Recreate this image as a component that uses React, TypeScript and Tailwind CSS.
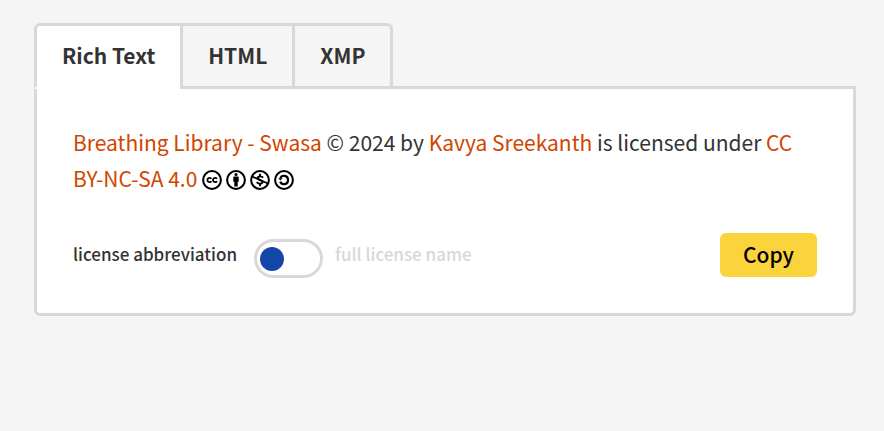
import { useState, type ReactNode } from "react";

const tabs = ["Rich Text", "HTML", "XMP"];

function Badge({ children }: { children: ReactNode }) {
  return (
    <svg viewBox="0 0 64 64" className="size-5" fill="none" stroke="currentColor" aria-hidden="true">
      <circle cx="32" cy="32" r="28.5" strokeWidth="6.5" />
      {children}
    </svg>
  );
}

function LicenseIcons() {
  return (
    <span className="mb-0.5 inline-flex gap-1 align-middle text-black">
      <Badge>
        <path d="M30 28A7 7 0 1 0 30 36M48 28A7 7 0 1 0 48 36" strokeWidth="5.8" />
      </Badge>
      <Badge>
        <g fill="currentColor" stroke="none">
          <circle cx="32" cy="14.5" r="5" />
          <path d="M25.5 21h13a2.2 2.2 0 0 1 2.2 2.2v14.3H37.5V53h-11V37.5h-3.200V23.200a2.200 2.200 0 0 1 2.200-2.200Z" />
        </g>
      </Badge>
      <Badge>
        <path d="M5 20 59 44" strokeWidth="6" />
        <path
          d="M42 24.500C37 19 24.500 19 24.500 26.500C24.500 32.500 40 31.500 40 38C40 46 27 45 21.500 38.500M32 12v8M32 44v8"
          strokeWidth="6"
        />
      </Badge>
      <Badge>
        <path d="M20.500 26C24 15 45 15.500 45 32S24 49 20 37.500" strokeWidth="7" />
        <path d="M13.500 26.500h14L20.500 33.500Z" fill="currentColor" stroke="none" />
      </Badge>
    </span>
  );
}

export default function App() {
  const [active, setActive] = useState("Rich Text");
  const [fullName, setFullName] = useState(false);

  return (
    <main className="min-h-screen bg-[#f5f5f5] pt-[23px] pr-7 pl-[34px] font-['Noto_Sans_CJK_SC','Open_Sans',sans-serif] text-[#333333]">
      <div role="tablist" className="relative flex">
        {tabs.map((tab) => (
          <button
            key={tab}
            type="button"
            role="tab"
            aria-selected={active === tab}
            onClick={() => setActive(tab)}
            className={`h-[66px] border-3 border-[#d8d8d8] px-[25px] pb-0.5 text-[21px] leading-6 font-bold not-first:-ml-[3px] first:rounded-tl-md last:rounded-tr-md ${
              active === tab ? "border-b-white bg-white" : "bg-[#f5f5f5]"
            }`}
          >
            {tab}
          </button>
        ))}
      </div>

      <section
        role="tabpanel"
        className="-mt-[3px] rounded-b-md border-3 border-[#d8d8d8] bg-white px-9 pt-[35px] pb-9"
      >
        <p className="text-[21px] leading-9">
          <a href="#work" className="text-[#d14500]">Breathing Library - Swasa</a> © 2024 by{" "}
          <a href="#creator" className="text-[#d14500]">Kavya Sreekanth</a> is licensed under{" "}
          <a href="#license" className="text-[#d14500]">CC BY-NC-SA 4.0</a>{" "}
          <LicenseIcons />
        </p>

        <div className="mt-[37px] flex h-11 items-start justify-between">
          <label className="flex items-start text-[17px] leading-6 font-medium">
            <span className={`mt-[9px] ${fullName ? "text-[#d8d8d8]" : ""}`}>license abbreviation</span>
            <input
              type="checkbox"
              role="switch"
              checked={fullName}
              onChange={(e) => setFullName(e.target.checked)}
              className="mt-[6px] mr-3 ml-[17px] flex h-[39px] w-[69px] cursor-pointer appearance-none items-center rounded-full border-3 border-[#d8d8d8] px-[3px] before:size-6 before:rounded-full before:bg-[#1547a8] checked:justify-end"
            />
            <span className={`mt-[9px] ${fullName ? "" : "text-[#d8d8d8]"}`}>full license name</span>
          </label>
          <button
            type="button"
            className="h-11 w-[97px] rounded-md bg-[#fbd43c] pb-0.5 text-[21px] leading-6 font-medium text-black"
          >
            Copy
          </button>
        </div>
      </section>
    </main>
  );
}
